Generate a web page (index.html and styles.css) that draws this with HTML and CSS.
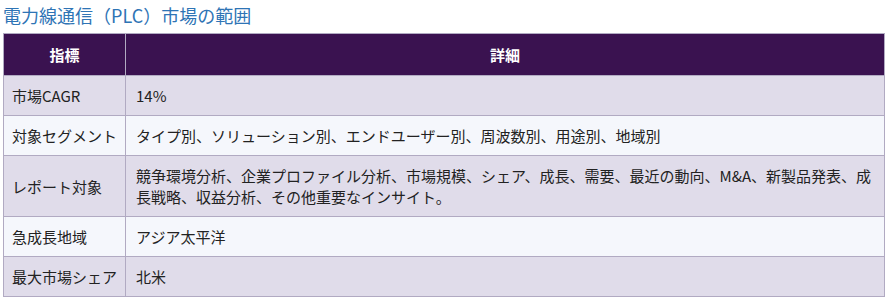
FILE: index.html
```html
<!DOCTYPE html>
<html lang="ja">
<head>
<meta charset="utf-8">
<link rel="stylesheet" href="styles.css">
</head>
<body>
<h2 class="title">電力線通信（PLC）市場の範囲</h2>
<table class="scope">
  <thead>
    <tr><th class="c1">指標</th><th>詳細</th></tr>
  </thead>
  <tbody>
    <tr class="odd"><td>市場CAGR</td><td>14%</td></tr>
    <tr class="even"><td>対象セグメント</td><td>タイプ別、ソリューション別、エンドユーザー別、周波数別、用途別、地域別</td></tr>
    <tr class="odd"><td>レポート対象</td><td>競争環境分析、企業プロファイル分析、市場規模、シェア、成長、需要、最近の動向、M&amp;A、新製品発表、成長戦略、収益分析、その他重要なインサイト。</td></tr>
    <tr class="even"><td>急成長地域</td><td>アジア太平洋</td></tr>
    <tr class="odd"><td>最大市場シェア</td><td>北米</td></tr>
  </tbody>
</table>
</body>
</html>
```
FILE: styles.css
```css
body {
  margin: 0;
  padding: 3px 3px 0 3px;
  font-family: "Noto Sans CJK JP", "Noto Sans", sans-serif;
  background: #ffffff;
  color: #222222;
}
.title {
  margin: 0 0 6px 0;
  font-size: 18px;
  font-weight: normal;
  color: #2e74b5;
  line-height: 24px;
}
.scope {
  width: 882px;
  border-collapse: collapse;
  font-size: 15px;
}
.scope th, .scope td {
  border: 1px solid #b1aac2;
  padding: 9px 9px;
  line-height: 21px;
  text-align: left;
  vertical-align: middle;
}
.scope th {
  background: #3a1250;
  color: #ffffff;
  font-weight: bold;
  text-align: center;
  padding: 10px 8px;
}
.scope .c1 { width: 105px; }
.scope td:first-child { width: 105px; white-space: nowrap; padding-left: 8px; padding-right: 8px; }
.scope td:last-child { padding-left: 10px; }
.odd td { background: #e0dcea; }
.even td { background: #f5f7fc; }
```
